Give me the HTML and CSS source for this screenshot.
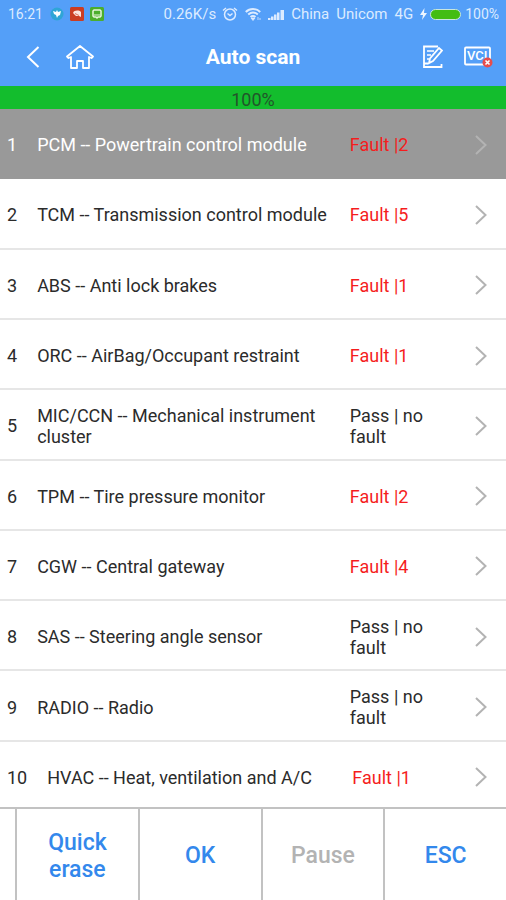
FILE: index.html
```html
<!DOCTYPE html>
<html lang="en">
<head>
<meta charset="utf-8">
<meta name="viewport" content="width=device-width, initial-scale=1">
<title>Auto scan</title>
<link rel="stylesheet" href="styles.css">
</head>
<body>
<header class="top">
  <div class="status">
    <span class="clock">16:21</span>
    <svg class="app" viewBox="0 0 14 14"><circle cx="7" cy="7" r="6.5" fill="#2fa5d6"/><path d="M3 4l3 1 1-2 1 2 3-1-1 4-2 1-1 2-1-3-2-1z" fill="#fff"/></svg>
    <svg class="app" viewBox="0 0 14 14"><rect width="14" height="14" rx="1.500" fill="#cb3d22"/><path d="M3 6c1-3 6-3 8-1v5L9 9 6 9z" fill="#fbe3dc"/><path d="M5 6.500l4 2" stroke="#cb3d22" stroke-width=".7"/></svg>
    <svg class="app" viewBox="0 0 14 14"><rect width="14" height="14" rx="1.500" fill="#4bae2d"/><path d="M4 3h6l1 1v5l-1 1H8l-1 1-1-1H4L3 9V4z" fill="none" stroke="#e6f6da" stroke-width="1.500"/><path d="M4 8h6" stroke="#e6f6da"/></svg>
    <span class="network speed">0.26K/s</span>
    <svg class="sig" viewBox="0 0 16 14"><g fill="none" stroke="#dcebff" stroke-width="1.500"><circle cx="8" cy="7.500" r="5.500"/><path d="M1 3.500l3-2.500M15 3.500L12 1M5.500 6.500L8 8.500l2.500-2"/></g></svg>
    <svg class="sig" viewBox="0 0 16 14"><g fill="none" stroke="#dcebff" stroke-width="2"><path d="M.8 5c4-4 10.400-4 14.400 0M3.200 7.500c3-2.600 6.600-2.600 9.600 0M5.500 10c1.500-1.300 3.500-1.300 5 0"/></g><path d="M6 11h4l-2 2.500zM13 10v3M15 11v2" fill="#dcebff" stroke="#dcebff" stroke-width=".8"/></svg>
    <svg class="sig" viewBox="0 0 16 14"><path d="M0 11h2.500v2H0zM3 9.500h2.500V13H3zM6 7.500h2.500V13H6zM9 5.500h2.500V13H9zM12.500 3H16v10h-3.500z" fill="#dcebff"/></svg>
    <span class="network carrier"><span>China</span> <span>Unicom</span> <span>4G</span></span>
    <svg class="bolt" viewBox="0 0 7 12"><path d="M4.500 0L0 7h3l-1 5 5-7H4z" fill="#eef6ff"/></svg>
    <span class="battery"></span>
    <span>100%</span>
  </div>
  <div class="bar">
    <div class="side">
      <button class="icon" aria-label="Back"><svg width="14" height="24" viewBox="0 0 14 24"><path d="M12.500 2L2 12l10.500 10" fill="none" stroke="#fff" stroke-width="2"/></svg></button>
      <button class="icon" aria-label="Home"><svg width="28" height="24" viewBox="0 0 28 24"><path d="M14 1L1 11.500l1.500 1.500L5 12v11h6v-7h6v7h6V12l2.500 1 1.500-1.500z" fill="none" stroke="#fff" stroke-width="1.800" stroke-linejoin="round"/></svg></button>
    </div>
    <h1>Auto scan</h1>
    <div class="side end">
      <button class="icon" aria-label="Edit report"><svg width="20" height="24" viewBox="0 0 20 24"><g fill="none" stroke="#fff" stroke-width="1.800"><path d="M15 1.500H1v20.500h17.500v-3M1 18.500h4"/><path d="M4 6h7M4 10h4M4 14h2" stroke-width="1.400"/><path d="M6 18l1-4.500L16 3l3 2.500L10 16z"/></g></svg></button>
      <button class="icon" aria-label="VCI disconnected"><svg width="29" height="22" viewBox="0 0 29 22"><rect x="1" y="1.500" width="25" height="17" rx="1" fill="none" stroke="#fff" stroke-width="1.800"/><text x="3" y="14" class="vci">VCI</text><circle cx="23.500" cy="16.500" r="5" fill="#e84d4b"/><path d="M21.500 14.500l4 4m0-4l-4 4" stroke="#fff" stroke-width="1.600"/></svg></button>
    </div>
  </div>
</header>
<div class="progress" role="progressbar" aria-label="Scan progress" aria-valuenow="100">100%</div>
<main class="scan">
  <ol class="modules">
    <li class="selected"><button class="row"><span>1</span><span class="name">PCM -- Powertrain control module</span><span class="result fault">Fault |2</span><svg class="chev" viewBox="0 0 14 22"><path d="M2 2l9.500 9L2 20"/></svg></button></li>
    <li><button class="row"><span>2</span><span class="name">TCM -- Transmission control module</span><span class="result fault">Fault |5</span><svg class="chev" viewBox="0 0 14 22"><path d="M2 2l9.500 9L2 20"/></svg></button></li>
    <li><button class="row"><span>3</span><span class="name">ABS -- Anti lock brakes</span><span class="result fault">Fault |1</span><svg class="chev" viewBox="0 0 14 22"><path d="M2 2l9.500 9L2 20"/></svg></button></li>
    <li><button class="row"><span>4</span><span class="name">ORC -- AirBag/Occupant restraint</span><span class="result fault">Fault |1</span><svg class="chev" viewBox="0 0 14 22"><path d="M2 2l9.500 9L2 20"/></svg></button></li>
    <li><button class="row"><span>5</span><span class="name">MIC/CCN -- Mechanical instrument cluster</span><span class="result">Pass | no fault</span><svg class="chev" viewBox="0 0 14 22"><path d="M2 2l9.500 9L2 20"/></svg></button></li>
    <li><button class="row"><span>6</span><span class="name">TPM -- Tire pressure monitor</span><span class="result fault">Fault |2</span><svg class="chev" viewBox="0 0 14 22"><path d="M2 2l9.500 9L2 20"/></svg></button></li>
    <li><button class="row"><span>7</span><span class="name">CGW -- Central gateway</span><span class="result fault">Fault |4</span><svg class="chev" viewBox="0 0 14 22"><path d="M2 2l9.500 9L2 20"/></svg></button></li>
    <li><button class="row"><span>8</span><span class="name">SAS -- Steering angle sensor</span><span class="result">Pass | no fault</span><svg class="chev" viewBox="0 0 14 22"><path d="M2 2l9.500 9L2 20"/></svg></button></li>
    <li><button class="row"><span>9</span><span class="name">RADIO -- Radio</span><span class="result">Pass | no fault</span><svg class="chev" viewBox="0 0 14 22"><path d="M2 2l9.500 9L2 20"/></svg></button></li>
    <li><button class="row"><span>10</span><span class="name">HVAC -- Heat, ventilation and A/C</span><span class="result fault">Fault |1</span><svg class="chev" viewBox="0 0 14 22"><path d="M2 2l9.500 9L2 20"/></svg></button></li>
  </ol>
</main>
<footer class="actions">
  <button>Quick erase</button>
  <button>OK</button>
  <button disabled>Pause</button>
  <button>ESC</button>
</footer>
</body>
</html>
```
FILE: styles.css
```css
* { box-sizing: border-box; }

body {
  margin: 0;
  height: 100vh;
  display: flex;
  flex-direction: column;
  background: #fff;
  color: #2b2b2b;
  font-family: Roboto, "Liberation Sans", sans-serif;
  font-size: 18px;
  line-height: 21px;
}

button {
  margin: 0;
  padding: 0;
  border: 0;
  background: none;
  color: inherit;
  font: inherit;
  cursor: pointer;
}

svg { display: block; flex: none; }

.top { background: #549ff8; color: #fff; }

.status {
  display: flex;
  align-items: center;
  height: 28px;
  padding: 0 7px 0 8px;
  color: #dcebff;
  font-size: 14px;
  white-space: nowrap;
}

.clock { margin-right: 7px; }
.app { width: 14px; height: 14px; margin-right: 6px; }
.network { font-size: 15px; }
.speed { margin-left: auto; margin-right: 6px; }
.sig { width: 16px; height: 14px; margin-right: 7px; }
.carrier { display: flex; gap: 7px; }
.bolt { width: 7px; height: 12px; margin: 0 3px 0 7px; }

.battery {
  width: 31px;
  height: 11px;
  margin-right: 4px;
  border: 1px solid #c9e6df;
  border-radius: 6px;
  background: #43bd13;
}

.bar {
  display: flex;
  align-items: center;
  height: 58px;
  padding: 0 13px 0 26px;
}

.side { flex: 1; display: flex; align-items: center; gap: 26px; }
.side.end { justify-content: flex-end; gap: 21px; margin-right: 0; }
.bar h1 { margin: 0 13px 0 0; font-size: 21px; line-height: 24px; font-weight: 700; }
.vci { fill: #fff; font-size: 13px; font-weight: 500; }

.progress {
  height: 23px;
  padding-top: 3px;
  background: #13bd2d;
  color: #22552a;
  text-align: center;
}

.scan { flex: 1; min-height: 0; overflow: hidden; }

.modules {
  display: grid;
  grid-auto-rows: 1fr;
  height: calc(100% + 5px);
  margin: 0;
  padding: 0;
  list-style: none;
}

.modules li { border-bottom: 2px solid #e6e6e6; }

.row {
  display: flex;
  align-items: center;
  width: 100%;
  height: 100%;
  padding: 3px 18px 0 7px;
  text-align: left;
}

.modules .selected { border-color: #999; background: #999; color: #fff; }
.name { flex: 3 1 0; margin-left: 20px; }
.result { flex: 1 1 0; }
.fault { color: #f51d1d; }
.chev { width: 14px; height: 22px; margin-left: 20px; }
.chev path { fill: none; stroke: #b3b3b3; stroke-width: 2; }

.actions {
  display: flex;
  height: 93px;
  padding-left: 15px;
  border-top: 2px solid #c2c2c2;
}

.actions button {
  flex: 1 1 0;
  padding: 2px 24px 0;
  border-left: 2px solid #c2c2c2;
  color: #3388ec;
  font-size: 23px;
  line-height: 27px;
  font-weight: 500;
}

.actions button:disabled { color: #b3b3b3; cursor: default; }
```
